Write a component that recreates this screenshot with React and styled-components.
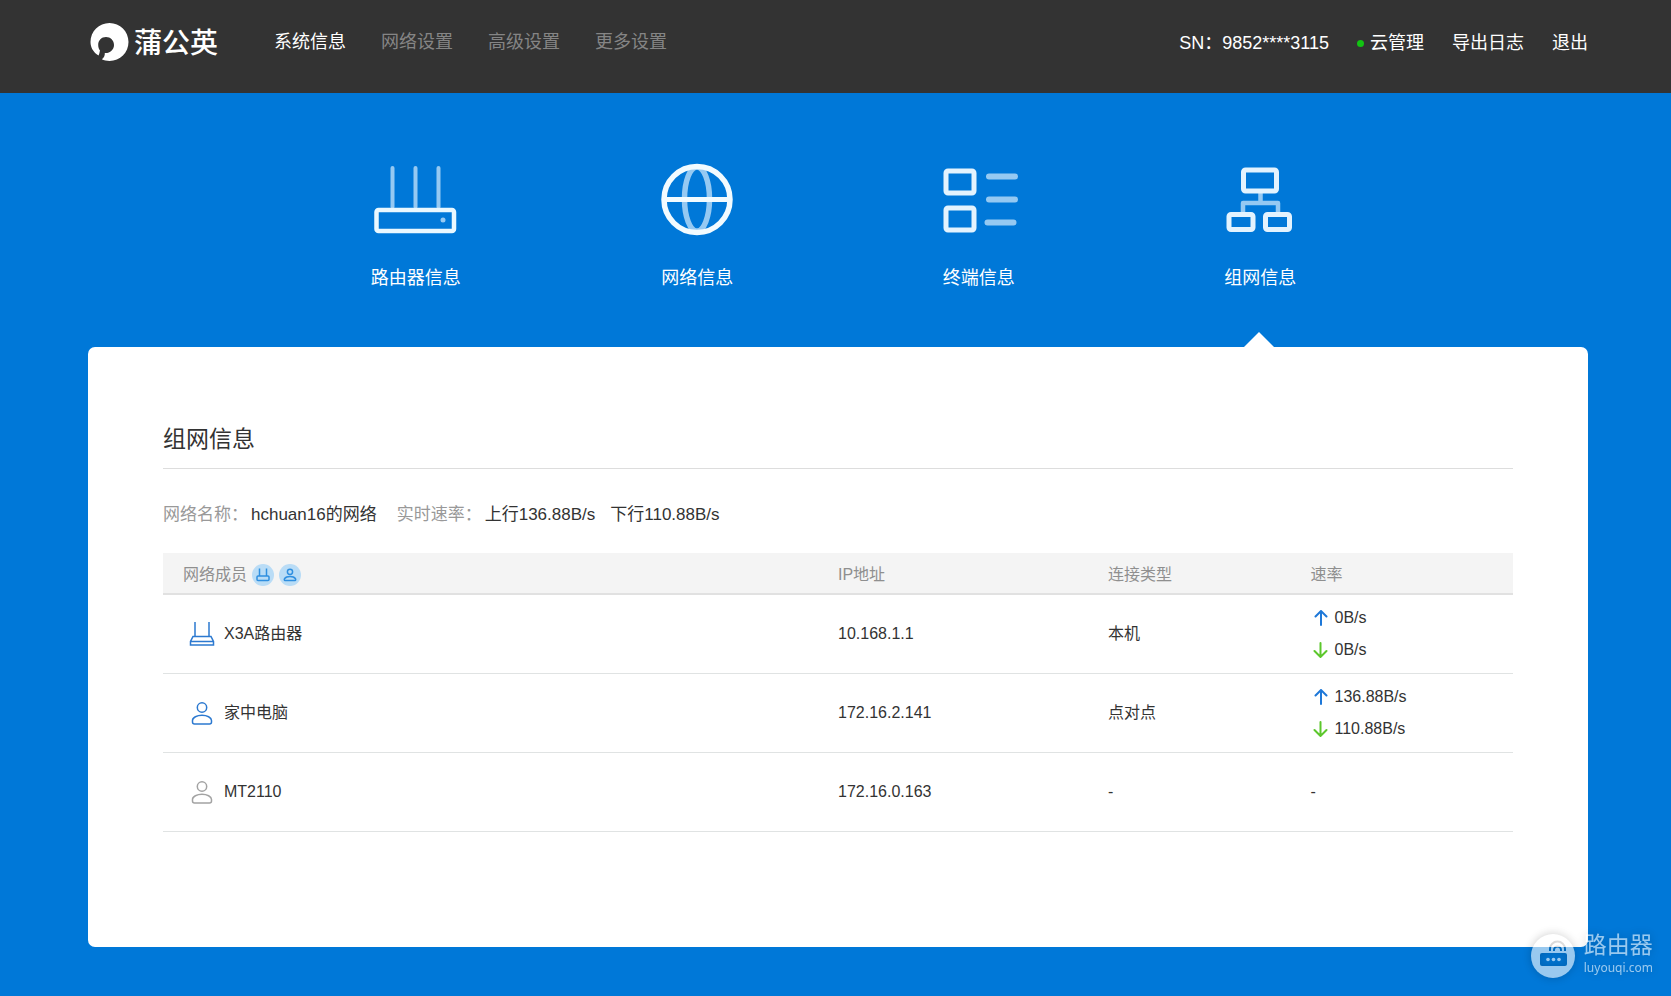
import React from "react";
import styled, { createGlobalStyle, css } from "styled-components";

const GlobalStyle = createGlobalStyle`
  * {
    box-sizing: border-box;
  }
  body {
    margin: 0;
    background: #0078d8;
    color: #333;
    font-family: "Liberation Sans", "Noto Sans CJK SC", sans-serif;
    font-size: 16px;
  }
  h1, p {
    margin: 0;
    font-weight: 400;
  }
  button {
    border: none;
    padding: 0;
    background: none;
    font: inherit;
    color: inherit;
    cursor: pointer;
  }
  a {
    color: inherit;
    text-decoration: none;
  }
`;

const Page = styled.div`
  min-height: 100vh;
  padding-bottom: 49px;
`;

const Header = styled.header`
  display: flex;
  align-items: flex-start;
  height: 93px;
  padding: 0 83px 0 90px;
  background: #333;
  color: #fff;
  font-size: 18px;
  line-height: 26px;
  white-space: nowrap;
`;

const Logo = styled.a`
  display: flex;
  align-items: center;
  gap: 5px;
  margin-top: 22px;
  height: 40px;
  font-size: 28px;
  line-height: 40px;
  font-weight: 500;
`;

const LogoText = styled.span`
  padding-top: 3px;
`;

const Nav = styled.nav`
  display: flex;
  gap: 35px;
  margin: 29px 0 0 56px;
`;

const NavLink = styled.a`
  color: ${(props) => (props.$active ? "#fff" : "#858585")};
`;

const Tools = styled.div`
  display: flex;
  gap: 28px;
  margin: 30px 0 0 auto;
`;

const CloudLink = styled.a`
  display: flex;
  align-items: center;
  gap: 6px;
  &::before {
    content: "";
    width: 7px;
    height: 7px;
    border-radius: 50%;
    background: #12c312;
  }
`;

const Tabs = styled.div`
  display: grid;
  grid-template-columns: repeat(4, 1fr);
  height: 254px;
  padding: 0 270px 0 275px;
`;

const Tab = styled.button`
  position: relative;
  display: flex;
  flex-direction: column;
  align-items: center;
  gap: 23px;
  padding-top: 65px;
  color: #fff;
  font-size: 18px;
  line-height: 26px;
  ${(props) =>
    props.$active &&
    css`
      &::after {
        content: "";
        position: absolute;
        bottom: 0;
        left: 50%;
        margin-left: -16px;
        border: 15px solid transparent;
        border-top: none;
        border-bottom-color: #fff;
      }
    `}
`;

const Panel = styled.main`
  min-height: 600px;
  margin: 0 83px 0 88px;
  padding: 75px;
  border-radius: 7px;
  background: #fff;
`;

const Title = styled.h1`
  padding: 1px 0 12px;
  border-bottom: 1px solid #ddd;
  font-size: 23px;
  line-height: 33px;
`;

const Summary = styled.p`
  display: flex;
  margin: 33px 0 25px;
  font-size: 17px;
  line-height: 26px;
`;

const Label = styled.span`
  margin-right: 3px;
  color: #999;
`;

const Value = styled.span`
  margin-right: ${(props) => (props.$wide ? "20px" : "15px")};
`;

const Table = styled.table`
  width: 100%;
  table-layout: fixed;
  border-spacing: 0;
  line-height: 24px;
  th,
  td {
    padding: 0;
    text-align: left;
    font-weight: 400;
  }
  th {
    height: 42px;
    padding-top: 3px;
    border-bottom: 2px solid #e1e1e1;
    background: #f4f4f4;
    color: #8f8f8f;
  }
  td {
    height: 79px;
    border-bottom: 1px solid #e0e3e3;
  }
`;

const Col = styled.col`
  width: ${(props) => props.$width};
`;

const HeadCell = styled.div`
  display: flex;
  align-items: center;
  gap: 5px;
  padding-left: 20px;
`;

const Badge = styled.button`
  display: flex;
  align-items: center;
  justify-content: center;
  width: 22px;
  height: 22px;
  border-radius: 50%;
  background: #b9dcf6;
`;

const Member = styled.div`
  display: flex;
  align-items: center;
  gap: 9px;
  padding-left: 26px;
`;

const Rate = styled.div`
  display: flex;
  align-items: center;
  gap: 7px;
  padding-left: 2px;
  line-height: 32px;
`;

const Watermark = styled.aside`
  position: absolute;
  right: 18px;
  top: 929px;
  display: flex;
  align-items: center;
  gap: 6px;
  color: #fff;
  opacity: 0.6;
  filter: drop-shadow(0 0 5px rgba(0, 0, 0, 0.35));
`;

const MarkName = styled.div`
  font-size: 23px;
  line-height: 28px;
`;

const MarkSite = styled.div`
  font-family: "Noto Sans", sans-serif;
  font-size: 12px;
  line-height: 18px;
`;

const LogoMark = () => (
  <svg width="39" height="40" viewBox="0 0 39 40">
    <path
      fill="#fff"
      d="M8.500 33.500C3.500 30.500 .5 25.500 .5 20C.5 9.500 9 1 19.500 1S38.500 9.500 38.500 20S30 39 19.500 39C16.500 39 14 38.400 11.800 37.300C14 35.500 15 33.500 14.800 31C19.500 31.500 24 28 24 23C24 18.500 20.500 15 16 15S8.200 18.500 8.200 23C8.200 25.500 9 27.300 10 28.500C9.500 30 9.500 32 8.500 33.500Z"
    />
  </svg>
);

const RouterIcon = () => (
  <svg width="84" height="84" viewBox="0 0 84 84" fill="none" strokeLinecap="round">
    <path d="M18.500 10V49M41.500 10V49M64.500 10V49" stroke="#95c9f2" strokeWidth="4" />
    <rect x="2.500" y="52" width="77.500" height="21" rx="2" stroke="#e9f8ff" strokeWidth="4.500" />
    <circle cx="69" cy="62" r="2.500" fill="#95c9f2" />
  </svg>
);

const GlobeIcon = () => (
  <svg width="84" height="84" viewBox="0 0 84 84" fill="none">
    <ellipse cx="42" cy="41" rx="12.500" ry="32" stroke="#95c9f2" strokeWidth="5.500" />
    <path d="M9 41.500H75" stroke="#f2fbff" strokeWidth="5" />
    <circle cx="42" cy="41.500" r="33" stroke="#f2fbff" strokeWidth="5.500" />
  </svg>
);

const ListIcon = () => (
  <svg width="84" height="84" viewBox="0 0 84 84" fill="none">
    <g stroke="#e3f3fe" strokeWidth="5">
      <rect x="9" y="13" width="28" height="22" rx="2" />
      <rect x="9" y="50" width="28" height="22" rx="2" />
    </g>
    <path
      d="M52 18.500H78M52 41.500H78M50.500 64.500H76.500"
      stroke="#95c9f2"
      strokeWidth="6"
      strokeLinecap="round"
    />
  </svg>
);

const NetworkIcon = () => (
  <svg width="84" height="84" viewBox="0 0 84 84" fill="none">
    <path d="M42.500 35V45M25 55V45H60V55" stroke="#95c9f2" strokeWidth="4.500" strokeLinejoin="round" />
    <g stroke="#e3f3fe" strokeWidth="5">
      <rect x="25.500" y="12" width="33" height="21" rx="2" />
      <rect x="11" y="56.500" width="24" height="15" rx="2" />
      <rect x="47.500" y="56.500" width="24" height="15" rx="2" />
    </g>
  </svg>
);

const DeviceIcon = () => (
  <svg width="26" height="26" viewBox="0 0 26 26" fill="none" stroke="#2c79d0" strokeWidth="1.500">
    <path d="M6 1V15M20 1V15M4 15.500H22L24.500 20.500V24H1.500V20.500L4 15.500ZM1.500 20.500H24.500" />
  </svg>
);

const UserIcon = ({ color }) => (
  <svg width="26" height="26" viewBox="0 0 26 26" fill="none" stroke={color} strokeWidth="1.500">
    <circle cx="13" cy="7.500" r="4.700" />
    <path d="M5.500 24H20.500Q22.500 24 22.500 22V20.500C22.500 17.500 18 15.300 13 15.300S3.500 17.500 3.500 20.500V22Q3.500 24 5.500 24Z" />
  </svg>
);

const SmallDevice = () => (
  <svg width="14" height="14" viewBox="0 0 14 14" fill="none" stroke="#2f8fe0" strokeWidth="1.500">
    <path d="M3.500 .5V8M10.500 .5V8" />
    <rect x="1" y="8" width="12" height="4.500" rx="1" />
  </svg>
);

const SmallUser = () => (
  <svg width="14" height="14" viewBox="0 0 14 14" fill="none" stroke="#2f8fe0" strokeWidth="1.500">
    <circle cx="7" cy="3.800" r="2.600" />
    <path d="M2 12.500H12C13.500 12.500 13 8.500 7 8.500S.5 12.500 2 12.500Z" />
  </svg>
);

const Arrow = ({ down }) => (
  <svg width="15" height="16" viewBox="0 0 15 16" fill="none" strokeWidth="2" strokeLinecap="round">
    {down ? (
      <path d="M7.500 1V14.500M1.500 9L7.500 15L13.500 9" stroke="#5cc72c" />
    ) : (
      <path d="M8 15V1.500M2.500 6.500L8 1L13.500 6.500" stroke="#1e78d8" />
    )}
  </svg>
);

const MarkIcon = () => (
  <svg width="50" height="50" viewBox="0 0 50 50">
    <mask id="routerCut">
      <rect width="50" height="50" fill="#fff" />
      <rect x="12" y="24" width="27" height="13" rx="2" fill="#000" />
      <g fill="none" stroke="#000" strokeWidth="2">
        <path d="M22 22V20A7.500 7.500 0 0 1 37 20V22" />
        <path d="M26 22V21A3.500 3.500 0 0 1 33 21V22" />
      </g>
      <g fill="#fff">
        <circle cx="20" cy="30.500" r="1.800" />
        <circle cx="25.500" cy="30.500" r="1.800" />
        <circle cx="31" cy="30.500" r="1.800" />
      </g>
    </mask>
    <circle cx="25" cy="27" r="22" fill="#fff" mask="url(#routerCut)" />
  </svg>
);

const navItems = ["系统信息", "网络设置", "高级设置", "更多设置"];

const tabs = [
  { name: "路由器信息", Icon: RouterIcon },
  { name: "网络信息", Icon: GlobeIcon },
  { name: "终端信息", Icon: ListIcon },
  { name: "组网信息", Icon: NetworkIcon, active: true },
];

const members = [
  { name: "X3A路由器", icon: <DeviceIcon />, ip: "10.168.1.1", type: "本机", up: "0B/s", down: "0B/s" },
  {
    name: "家中电脑",
    icon: <UserIcon color="#2c79d0" />,
    ip: "172.16.2.141",
    type: "点对点",
    up: "136.88B/s",
    down: "110.88B/s",
  },
  { name: "MT2110", icon: <UserIcon color="#a3a3a3" />, ip: "172.16.0.163", type: "-" },
];

const App = () => {
  return (
    <>
      <GlobalStyle />
      <Page>
        <Header>
          <Logo href="#">
            <LogoMark />
            <LogoText>蒲公英</LogoText>
          </Logo>
          <Nav>
            {navItems.map((item, index) => (
              <NavLink key={item} href="#" $active={index === 0}>
                {item}
              </NavLink>
            ))}
          </Nav>
          <Tools>
            <span>SN：9852****3115</span>
            <CloudLink href="#">云管理</CloudLink>
            <a href="#">导出日志</a>
            <a href="#">退出</a>
          </Tools>
        </Header>
        <Tabs>
          {tabs.map(({ name, Icon, active }) => (
            <Tab key={name} type="button" $active={active}>
              <Icon />
              {name}
            </Tab>
          ))}
        </Tabs>
        <Panel>
          <Title>组网信息</Title>
          <Summary>
            <Label>网络名称：</Label>
            <Value $wide>hchuan16的网络</Value>
            <Label>实时速率：</Label>
            <Value>上行136.88B/s</Value>
            <Value>下行110.88B/s</Value>
          </Summary>
          <Table>
            <colgroup>
              <Col $width="50%" />
              <Col $width="20%" />
              <Col $width="15%" />
              <Col $width="15%" />
            </colgroup>
            <thead>
              <tr>
                <th>
                  <HeadCell>
                    网络成员
                    <Badge type="button" aria-label="路由器">
                      <SmallDevice />
                    </Badge>
                    <Badge type="button" aria-label="用户">
                      <SmallUser />
                    </Badge>
                  </HeadCell>
                </th>
                <th>IP地址</th>
                <th>连接类型</th>
                <th>速率</th>
              </tr>
            </thead>
            <tbody>
              {members.map((member) => (
                <tr key={member.name}>
                  <td>
                    <Member>
                      {member.icon}
                      {member.name}
                    </Member>
                  </td>
                  <td>{member.ip}</td>
                  <td>{member.type}</td>
                  <td>
                    {member.up ? (
                      <>
                        <Rate>
                          <Arrow />
                          {member.up}
                        </Rate>
                        <Rate>
                          <Arrow down />
                          {member.down}
                        </Rate>
                      </>
                    ) : (
                      "-"
                    )}
                  </td>
                </tr>
              ))}
            </tbody>
          </Table>
        </Panel>
        <Watermark>
          <MarkIcon />
          <div>
            <MarkName>路由器</MarkName>
            <MarkSite>luyouqi.com</MarkSite>
          </div>
        </Watermark>
      </Page>
    </>
  );
};

export default App;
